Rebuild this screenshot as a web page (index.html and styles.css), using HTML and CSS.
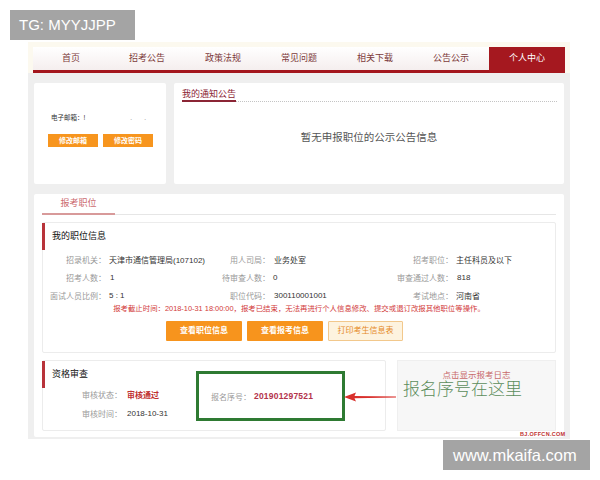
FILE: index.html
```html
<!DOCTYPE html>
<html lang="zh-CN">
<head>
<meta charset="utf-8">
<title>个人中心</title>
<link rel="stylesheet" href="styles.css">
</head>
<body>
<div class="tg">TG: MYYJJPP</div>
<div class="page">
  <nav class="nav">
    <ul class="nav-list">
      <li class="nav-item">首页</li>
      <li class="nav-item">招考公告</li>
      <li class="nav-item">政策法规</li>
      <li class="nav-item">常见问题</li>
      <li class="nav-item">相关下载</li>
      <li class="nav-item">公告公示</li>
      <li class="nav-item active">个人中心</li>
    </ul>
  </nav>
  <div class="content">
    <div class="top-row">
      <section class="card user-card">
        <p class="email">电子邮箱：!<span class="dot dot-a">.</span><span class="dot dot-b">.</span></p>
        <div class="btns-sm">
          <span class="btn-sm">修改邮箱</span>
          <span class="btn-sm">修改密码</span>
        </div>
      </section>
      <section class="card notice-card">
        <div class="notice-head"><span class="notice-title">我的通知公告</span></div>
        <p class="notice-empty">暂无申报职位的公示公告信息</p>
      </section>
    </div>
    <section class="card main-card">
      <div class="tabs"><span class="tab">报考职位</span></div>
      <div class="box info-box">
        <h3 class="box-title">我的职位信息</h3>
        <div class="info-grid">
          <span class="lb">招录机关：</span><span class="val">天津市通信管理局(107102)</span>
          <span class="lb">用人司局：</span><span class="val">业务处室</span>
          <span class="lb">招考职位：</span><span class="val">主任科员及以下</span>
          <span class="lb">招考人数：</span><span class="val">1</span>
          <span class="lb">待审查人数：</span><span class="val">0</span>
          <span class="lb">审查通过人数：</span><span class="val">818</span>
          <span class="lb">面试人员比例：</span><span class="val">5 : 1</span>
          <span class="lb">职位代码：</span><span class="val">300110001001</span>
          <span class="lb">考试地点：</span><span class="val">河南省</span>
        </div>
        <p class="deadline">报考截止时间：2018-10-31 18:00:00，报考已结束，无法再进行个人信息修改、提交或退订改报其他职位等操作。</p>
        <div class="actions">
          <span class="btn">查看职位信息</span>
          <span class="btn">查看报考信息</span>
          <span class="btn btn-outline">打印考生信息表</span>
        </div>
      </div>
      <div class="bottom-row">
        <div class="box qual-box">
          <div class="qual-left">
            <h3 class="box-title">资格审查</h3>
            <div class="qual-grid">
              <span class="lb">审核状态：</span><span class="val status">审核通过</span>
              <span class="lb">审核时间：</span><span class="val">2018-10-31</span>
            </div>
          </div>
          <div class="serial">
            <span class="lb">报名序号：</span><span class="serial-val">201901297521</span>
          </div>
        </div>
        <div class="log-box">
          <p class="log-link">点击显示报考日志</p>
          <p class="log-note">报名序号在这里</p>
        </div>
      </div>
    </section>
  </div>
</div>
<svg class="arrow" width="52" height="10" viewBox="0 0 52 10" aria-hidden="true">
  <path d="M0,5 L12,0.6 L10.5,3.9 L52,4.6 L52,5.4 L10.5,6.3 L12,9.4 Z" fill="#d9302c"/>
</svg>
<div class="offcn">BJ.OFFCN.COM</div>
<div class="wm">www.mkaifa.com</div>
</body>
</html>
```
FILE: styles.css
```css
* { box-sizing: border-box; margin: 0; padding: 0; }

body {
  margin: 0;
  width: 600px;
  height: 480px;
  overflow: hidden;
  position: relative;
  background: #fff;
  font-family: "Liberation Sans", "Noto Sans CJK SC", sans-serif;
  color: #333;
}

.tg {
  position: absolute;
  left: 10px;
  top: 10px;
  width: 125px;
  height: 30px;
  background: #a4a4a4;
  color: #fff;
  font-size: 15px;
  line-height: 30px;
  padding-left: 9px;
}

.page {
  margin: 42px 0 0 28px;
  width: 542px;
}

/* nav */
.nav {
  background: #fcf9ef;
  padding: 5px 5px 0;
}
.nav-list {
  list-style: none;
  display: flex;
  align-items: flex-start;
  border-bottom: 3px solid #a3161d;
}
.nav-item {
  flex: 1;
  height: 23px;
  line-height: 23px;
  text-align: center;
  font-size: 9px;
  color: #7d3b3b;
  background: linear-gradient(#ffffff, #f5eeee);
}
.nav-item.active {
  height: 26px;
  margin-bottom: -3px;
  background: #a5181f;
  color: #fff;
}

/* content */
.content {
  background: #efefef;
  padding: 10px 6px 2px;
}
.card {
  background: #fff;
  border-radius: 2px;
}
.top-row {
  display: flex;
  gap: 8px;
  height: 101px;
}
.user-card {
  width: 132px;
  padding: 30px 0 0 14px;
}
.email {
  font-size: 6.5px;
  line-height: 10px;
  color: #333;
  padding-left: 3px;
}
.dot { color: #888; }
.dot-a { margin-left: 45px; }
.dot-b { margin-left: 12px; }
.btns-sm {
  display: flex;
  gap: 5px;
  margin-top: 11px;
}
.btn-sm {
  width: 50px;
  height: 13px;
  line-height: 13px;
  text-align: center;
  font-size: 7px;
  font-weight: bold;
  color: #fff;
  background: #f7951e;
}

.notice-card {
  flex: 1;
  padding-top: 5px;
}
.notice-head {
  display: flex;
  margin: 0 7px 0 8px;
  border-bottom: 1px dotted #c4c4c4;
}
.notice-title {
  font-size: 9px;
  line-height: 12px;
  color: #8b2535;
  border-bottom: 2px solid #8b2535;
  margin-bottom: -1px;
}
.notice-empty {
  margin-top: 28px;
  text-align: center;
  font-size: 10.5px;
  line-height: 14px;
  color: #555;
}

/* main card */
.main-card {
  margin-top: 10px;
  padding: 0 8px 6px;
}
.tabs {
  display: flex;
  border-bottom: 1px solid #e6e6e6;
}
.tab {
  width: 73px;
  text-align: center;
  font-size: 9px;
  line-height: 19px;
  color: #cc6b70;
  border-bottom: 2px solid #d89a9a;
  margin-bottom: -1px;
}
.box {
  border: 1px solid #ececec;
  border-radius: 2px;
}
.info-box {
  margin-top: 7px;
  padding-bottom: 11px;
}
.box-title {
  margin-left: -1px;
  border-left: 3px solid #b8333a;
  height: 27px;
  line-height: 27px;
  padding-left: 7px;
  font-size: 9px;
  font-weight: normal;
  color: #111;
}
.info-grid {
  display: grid;
  grid-template-columns: 63px 104px 60px 110px 73px 1fr;
  grid-auto-rows: 18px;
  align-items: center;
  font-size: 8px;
}
.lb {
  text-align: right;
  color: #999;
  white-space: nowrap;
}
.val {
  color: #333;
  padding-left: 3px;
  white-space: nowrap;
}
.info-grid .val:nth-child(4n) { padding-left: 4px; }
.deadline {
  font-size: 7.4px;
  line-height: 10px;
  text-align: center;
  color: #d23a3a;
  white-space: nowrap;
}
.actions {
  display: flex;
  gap: 5px;
  padding-left: 123px;
  margin-top: 7px;
}
.btn {
  width: 76px;
  height: 20px;
  line-height: 20px;
  text-align: center;
  font-size: 8px;
  font-weight: bold;
  color: #fff;
  background: #f7941d;
  border-radius: 1px;
}
.btn-outline {
  width: 75px;
  line-height: 18px;
  background: #fdf3df;
  border: 1px solid #f2c88c;
  color: #e58a1f;
  font-weight: normal;
}

.bottom-row {
  display: flex;
  gap: 11px;
  margin-top: 7px;
  height: 71px;
}
.qual-box {
  width: 344px;
  display: flex;
}
.qual-left {
  width: 153px;
}
.qual-grid {
  display: grid;
  grid-template-columns: 79px 1fr;
  grid-auto-rows: 19px;
  align-items: center;
  margin-top: -3px;
  font-size: 8px;
}
.qual-grid .val { padding-left: 5px; }
.status {
  color: #c0302f;
  font-weight: bold;
}
.serial {
  width: 149px;
  height: 50px;
  margin-top: 10px;
  border: 3px solid #2e7a32;
  display: flex;
  align-items: center;
  padding-left: 12px;
  font-size: 8px;
}
.serial-val {
  margin-left: 3px;
  font-size: 8.5px;
  font-weight: bold;
  color: #b3324a;
  letter-spacing: 0.2px;
}
.log-box {
  width: 159px;
  background: #f7f7f7;
  border: 1px solid #efefef;
  padding-top: 8px;
}
.log-link {
  text-align: center;
  font-size: 8.5px;
  line-height: 12px;
  color: #c86a6a;
}
.log-note {
  padding-left: 5px;
  font-size: 17px;
  line-height: 18px;
  font-weight: 300;
  color: #5b8d5b;
  white-space: nowrap;
}

/* overlays */
.arrow {
  position: absolute;
  left: 344px;
  top: 392px;
}
.offcn {
  position: absolute;
  left: 520px;
  top: 431px;
  font-size: 5.5px;
  font-weight: bold;
  color: #c0302f;
  letter-spacing: 0.3px;
}
.wm {
  position: absolute;
  left: 443px;
  top: 440px;
  width: 147px;
  height: 30px;
  background: #a4a4a4;
  color: #fff;
  font-size: 16.5px;
  line-height: 30px;
  padding-left: 10px;
}
```
